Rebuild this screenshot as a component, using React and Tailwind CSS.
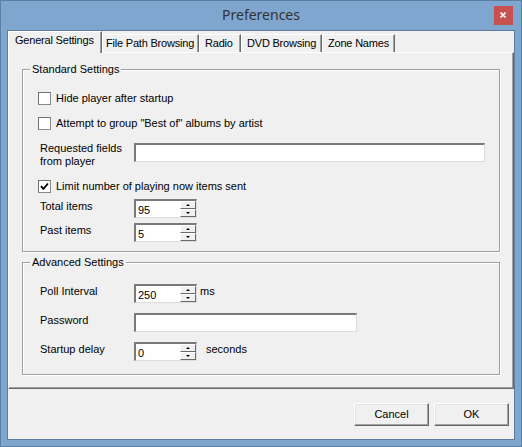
import React from "react";

const tabs = [
  { label: "File Path Browsing", w: "w-[97px]", pl: "pl-[3px]" },
  { label: "Radio", w: "w-[42px]", pl: "pl-[5px]" },
  { label: "DVD Browsing", w: "w-[81px]", pl: "pl-[5px]" },
  { label: "Zone Names", w: "w-[73px]", pl: "pl-[5px]" },
];

function Checkbox({ checked }) {
  return (
    <span className="flex h-[13px] w-[13px] items-center justify-center border border-[#8a8a8a] border-t-[#707070] border-l-[#707070] bg-white">
      {checked && (
        <svg width="9" height="9" viewBox="0 0 9 9">
          <path d="M1 4.2 L3.4 6.8 L8 1.5" fill="none" stroke="#000" strokeWidth="1.8" />
        </svg>
      )}
    </span>
  );
}

function CheckRow({ checked, children }) {
  return (
    <div className="flex h-[14px] items-center gap-[5px]">
      <Checkbox checked={checked} />
      <span className="leading-[13px]">{children}</span>
    </div>
  );
}

function TextBox({ w }) {
  return (
    <div className={`h-[19px] ${w} border-t-2 border-l-2 border-t-[#7a7a7a] border-l-[#7a7a7a] border-b border-r border-b-[#dcdcdc] border-r-[#dcdcdc] bg-white`} />
  );
}

function Spin({ value }) {
  return (
    <div className="flex h-[19px] w-[63px] border-t-2 border-l-2 border-t-[#7a7a7a] border-l-[#7a7a7a] border-b border-r border-b-[#dcdcdc] border-r-[#dcdcdc] bg-white">
      <span className="flex-1 pl-[2px] pt-px leading-[16px]">{value}</span>
      <div className="flex w-[16px] flex-col">
        <span className="flex h-[8px] items-center justify-center border-t border-l border-white border-b border-r border-b-[#696969] border-r-[#696969] bg-[#f0f0f0]">
          <span className="h-0 w-0 border-x-[2px] border-x-transparent border-b-[2px] border-b-black" />
        </span>
        <span className="flex h-[8px] items-center justify-center border-t border-l border-white border-b border-r border-b-[#696969] border-r-[#696969] bg-[#f0f0f0]">
          <span className="h-0 w-0 border-x-[2px] border-x-transparent border-t-[2px] border-t-black" />
        </span>
      </div>
    </div>
  );
}

function FieldRow({ label, children }) {
  return (
    <div className="flex h-[19px] items-start">
      <span className="ml-[2px] mt-px w-[94px] leading-[13px]">{label}</span>
      {children}
    </div>
  );
}

function Group({ title, className, children }) {
  return (
    <fieldset
      className={`border border-[#a0a0a0] shadow-[inset_1px_1px_0_#fff,1px_1px_0_#fff] ${className}`}
    >
      <legend className="ml-[7px] bg-[#f0f0f0] px-[2px] leading-[13px]">{title}</legend>
      <div className="flex flex-col pl-[15px]">{children}</div>
    </fieldset>
  );
}

function WinButton({ children }) {
  return (
    <button className="h-[23px] w-[75px] border-t border-l border-white border-b border-r border-b-[#696969] border-r-[#696969] bg-[#f0f0f0] shadow-[inset_-1px_-1px_0_#a0a0a0,inset_1px_1px_0_#e3e3e3] leading-[13px]">
      {children}
    </button>
  );
}

export default function App() {
  return (
    <div className="flex h-[447px] w-[522px] flex-col border border-[#5c7fa6] bg-[#7fa6ce] font-['Liberation_Sans',Arial,sans-serif] text-[11px] text-black">
      <div className="grid h-[29px] grid-cols-[1fr_auto_1fr] items-center">
        <div />
        <span className="-mt-[2px] font-['Noto_Sans',sans-serif] text-[14px] leading-[19px] text-[#333]">
          Preferences
        </span>
        <div className="flex justify-end self-start pr-[8px] pt-[5px]">
          <button className="flex h-[19px] w-[19px] items-center justify-center bg-[#c75050]">
            <svg width="19" height="19" viewBox="0 0 19 19">
              <path d="M6.5 6.5 L11.5 11.5 M11.5 6.5 L6.5 11.5" stroke="#fff" strokeWidth="1.7" />
            </svg>
          </button>
        </div>
      </div>

      <div className="mx-[6px] mb-[6px] flex flex-1 flex-col border border-[#5f7e9f] bg-[#f0f0f0]">
        {/* tab strip */}
        <div className="flex h-[21px] items-end">
          <div className="relative z-10 -mb-px h-[22px] w-[94px] border-t border-l border-white border-r border-r-[#696969] bg-[#f0f0f0] pl-[6px] pt-[2px] leading-[13px] tracking-[-0.2px] whitespace-nowrap shadow-[inset_-1px_0_0_#a0a0a0]">
            General Settings
          </div>
          {tabs.map((t) => (
            <div
              key={t.label}
              className={`h-[18px] ${t.w} ${t.pl} border-t border-l border-white border-r border-r-[#696969] pt-[2px] leading-[13px] tracking-[-0.2px] whitespace-nowrap shadow-[inset_-1px_0_0_#a0a0a0]`}
            >
              {t.label}
            </div>
          ))}
        </div>

        {/* tab panel */}
        <div className="flex h-[337px] flex-col border-t border-l border-white border-r border-b border-r-[#696969] border-b-[#696969] px-[13px] pt-[10px] shadow-[inset_-1px_-1px_0_#a0a0a0]">
          <Group title="Standard Settings" className="pt-[15px] pb-[9px]">
            <CheckRow>Hide player after startup</CheckRow>
            <div className="mt-[11px]">
              <CheckRow>Attempt to group "Best of" albums by artist</CheckRow>
            </div>
            <div className="mt-[12px] flex h-[26px] items-start">
              <span className="ml-[2px] w-[94px] leading-[13px]">
                Requested fields
                <br />
                from player
              </span>
              <div className="mt-px">
                <TextBox w="w-[351px]" />
              </div>
            </div>
            <div className="mt-[11px]">
              <CheckRow checked>Limit number of playing now items sent</CheckRow>
            </div>
            <div className="mt-[6px]">
              <FieldRow label="Total items">
                <Spin value="95" />
              </FieldRow>
            </div>
            <div className="mt-[5px]">
              <FieldRow label="Past items">
                <Spin value="5" />
              </FieldRow>
            </div>
          </Group>

          <Group title="Advanced Settings" className="mt-[4px] pt-[15px] pb-[13px]">
            <FieldRow label="Poll Interval">
              <Spin value="250" />
              <span className="ml-[3px] mt-px leading-[13px]">ms</span>
            </FieldRow>
            <div className="mt-[10px]">
              <FieldRow label="Password">
                <TextBox w="w-[223px]" />
              </FieldRow>
            </div>
            <div className="mt-[10px]">
              <FieldRow label="Startup delay">
                <Spin value="0" />
                <span className="ml-[9px] mt-px leading-[13px]">seconds</span>
              </FieldRow>
            </div>
          </Group>
        </div>

        <div className="mt-[14px] flex justify-end gap-[5px] pr-[5px]">
          <WinButton>Cancel</WinButton>
          <WinButton>OK</WinButton>
        </div>
      </div>
    </div>
  );
}
